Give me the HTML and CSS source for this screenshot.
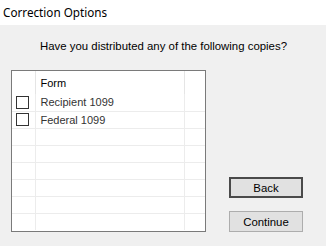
FILE: index.html
```html
<!DOCTYPE html>
<html lang="en">
<head>
    <meta charset="UTF-8">
    <meta name="viewport" content="width=device-width, initial-scale=1.0">
    <title>Correction Options</title>
    <link rel="stylesheet" href="styles.css">
</head>
<body>
    <header class="titlebar">
        <h1>Correction Options</h1>
    </header>
    <main class="dialog">
        <p class="question">Have you distributed any of the following copies?</p>
        <div class="content">
            <div class="listbox">
                <table class="grid">
                    <thead>
                        <tr>
                            <th class="col-check"></th>
                            <th class="col-form">Form</th>
                            <th class="col-rest"></th>
                        </tr>
                    </thead>
                    <tbody>
                        <tr>
                            <td class="col-check"><span class="checkbox"></span></td>
                            <td class="col-form">Recipient 1099</td>
                            <td class="col-rest"></td>
                        </tr>
                        <tr>
                            <td class="col-check"><span class="checkbox"></span></td>
                            <td class="col-form">Federal 1099</td>
                            <td class="col-rest"></td>
                        </tr>
                        <tr><td></td><td></td><td></td></tr>
                        <tr><td></td><td></td><td></td></tr>
                        <tr><td></td><td></td><td></td></tr>
                        <tr><td></td><td></td><td></td></tr>
                        <tr><td></td><td></td><td></td></tr>
                        <tr class="last"><td></td><td></td><td></td></tr>
                    </tbody>
                </table>
            </div>
            <div class="buttons">
                <button class="btn btn-default">Back</button>
                <button class="btn">Continue</button>
            </div>
        </div>
    </main>
</body>
</html>
```

FILE: styles.css
```css
* {
    box-sizing: border-box;
}
body {
    margin: 0;
    padding: 0;
    width: 326px;
    height: 246px;
    background: #f0f0f0;
    font-family: "Liberation Sans", Arial, sans-serif;
    font-size: 11px;
    color: #000;
    overflow: hidden;
}
.titlebar {
    height: 25px;
    background: #fff;
    display: flex;
    align-items: center;
    padding-left: 3px;
    padding-bottom: 2px;
}
.titlebar h1 {
    margin: 0;
    font-family: "Noto Sans", sans-serif;
    font-size: 11.7px;
    font-weight: 400;
}
.dialog {
    display: flex;
    flex-direction: column;
}
.question {
    margin: 0;
    height: 41px;
    display: flex;
    justify-content: center;
    align-items: center;
    padding-left: 1px;
    font-size: 11.4px;
}
.content {
    display: flex;
    align-items: flex-end;
    padding-left: 11px;
    margin-top: 4px;
}
.listbox {
    width: 195px;
    height: 162px;
    background: #fff;
    border: 1px solid #7a7a7a;
    overflow: hidden;
}
.grid {
    width: 100%;
    border-collapse: collapse;
    table-layout: fixed;
}
.grid th {
    height: 23px;
    font-weight: 400;
    text-align: left;
    padding: 0 0 0 5px;
    border-right: 1px solid #e5e5e5;
}
.grid td {
    height: 17px;
    padding: 0 0 0 5px;
    border-right: 1px solid #ececec;
    border-bottom: 1px solid #ececec;
    color: #333;
    line-height: 16px;
}
.grid tr.last td {
    border-bottom: 0;
}
.grid .col-check {
    width: 23px;
}
.grid .col-check .checkbox {
    margin-left: -1px;
}
.grid .col-form {
    width: 149px;
}
.grid th:last-child,
.grid td:last-child {
    border-right: 0;
}
.checkbox {
    display: block;
    width: 13px;
    height: 13px;
    border: 1px solid #333;
    background: #fff;
}
.buttons {
    display: flex;
    flex-direction: column;
    gap: 13px;
    margin-left: 23px;
}
.btn {
    width: 74px;
    height: 21px;
    background: #e1e1e1;
    border: 1px solid #adadad;
    font-family: "Liberation Sans", Arial, sans-serif;
    font-size: 11.4px;
    color: #000;
    padding: 0;
}
.btn-default {
    border: 2px solid #4a4a4a;
}
```
